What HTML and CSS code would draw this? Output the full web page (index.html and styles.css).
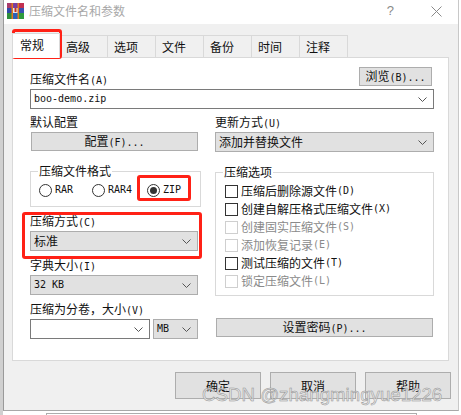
FILE: index.html
```html
<!DOCTYPE html>
<html lang="zh-CN">
<head>
    <meta charset="UTF-8">
    <title>压缩文件名和参数</title>
    <link rel="stylesheet" href="styles.css">
</head>
<body>
    <div class="window">
        <div class="titlebar">
            <svg class="app-icon" width="17" height="16" viewBox="0 0 17 16">
                <rect x="0" y="0" width="5" height="5" fill="#a83a6a"/>
                <rect x="0" y="5" width="5" height="5" fill="#2f4aa8"/>
                <rect x="0" y="10" width="5" height="6" fill="#2f8f3a"/>
                <rect x="6" y="0" width="5" height="5" fill="#7a3fa0"/>
                <rect x="6" y="5" width="5" height="5" fill="#e8e8e8"/>
                <rect x="6" y="10" width="5" height="6" fill="#2a62b8"/>
                <rect x="11" y="0" width="6" height="5" fill="#c23050"/>
                <rect x="11" y="5" width="6" height="5" fill="#3a50b0"/>
                <rect x="11" y="10" width="6" height="6" fill="#2f9a3e"/>
                <rect x="4.5" y="0" width="1.5" height="16" fill="#e07a20"/>
                <rect x="10.5" y="0" width="1.5" height="16" fill="#e07a20"/>
                <rect x="7.5" y="5" width="2" height="4" fill="#c03020"/>
            </svg>
            <span class="title">压缩文件名和参数</span>
            <span class="help-btn">?</span>
            <svg class="close-btn" width="11" height="11" viewBox="0 0 11 11">
                <path d="M0.5 0.5L10.5 10.5M10.5 0.5L0.5 10.5" stroke="#8a8a8a" fill="none"/>
            </svg>
        </div>

        <div class="content">
            <div class="tabs">
                <div class="tab active">常规</div>
                <div class="tab">高级</div>
                <div class="tab">选项</div>
                <div class="tab">文件</div>
                <div class="tab">备份</div>
                <div class="tab">时间</div>
                <div class="tab">注释</div>
            </div>

            <div class="panel">
                <div class="name-row">
                    <label class="lbl">压缩文件名<span class="en">(A)</span></label>
                    <button class="btn browse">浏览<span class="en">(B)...</span></button>
                </div>
                <div class="select white name-input">
                    <span class="en">boo-demo.zip</span>
                    <svg class="chev" width="9" height="5" viewBox="0 0 9 5"><path d="M0.5 0.5L4.5 4.5L8.5 0.5" stroke="#555" fill="none"/></svg>
                </div>

                <div class="columns">
                    <div class="col">
                        <label class="lbl">默认配置</label>
                        <button class="btn config">配置<span class="en">(F)...</span></button>

                        <fieldset class="group format">
                            <legend>压缩文件格式</legend>
                            <div class="radios">
                                <span class="radio"><i class="dot"></i><span class="en">RAR</span></span>
                                <span class="radio"><i class="dot"></i><span class="en">RAR4</span></span>
                                <span class="radio"><i class="dot on"></i><span class="en">ZIP</span></span>
                            </div>
                        </fieldset>

                        <label class="lbl method">压缩方式<span class="en">(C)</span></label>
                        <div class="select">
                            <span>标准</span>
                            <svg class="chev" width="9" height="5" viewBox="0 0 9 5"><path d="M0.5 0.5L4.5 4.5L8.5 0.5" stroke="#555" fill="none"/></svg>
                        </div>

                        <label class="lbl dict">字典大小<span class="en">(I)</span></label>
                        <div class="select">
                            <span class="en">32 KB</span>
                            <svg class="chev" width="9" height="5" viewBox="0 0 9 5"><path d="M0.5 0.5L4.5 4.5L8.5 0.5" stroke="#555" fill="none"/></svg>
                        </div>

                        <label class="lbl split">压缩为分卷，大小<span class="en">(V)</span></label>
                        <div class="split-row">
                            <div class="select white grow">
                                <span></span>
                                <svg class="chev" width="9" height="5" viewBox="0 0 9 5"><path d="M0.5 0.5L4.5 4.5L8.5 0.5" stroke="#555" fill="none"/></svg>
                            </div>
                            <div class="select unit">
                                <span class="en">MB</span>
                                <svg class="chev" width="9" height="5" viewBox="0 0 9 5"><path d="M0.5 0.5L4.5 4.5L8.5 0.5" stroke="#555" fill="none"/></svg>
                            </div>
                        </div>
                    </div>

                    <div class="col">
                        <label class="lbl">更新方式<span class="en">(U)</span></label>
                        <div class="select update">
                            <span>添加并替换文件</span>
                            <svg class="chev" width="9" height="5" viewBox="0 0 9 5"><path d="M0.5 0.5L4.5 4.5L8.5 0.5" stroke="#555" fill="none"/></svg>
                        </div>

                        <fieldset class="group options">
                            <legend>压缩选项</legend>
                            <div class="check"><i class="box"></i>压缩后删除源文件<span class="en">(D)</span></div>
                            <div class="check"><i class="box"></i>创建自解压格式压缩文件<span class="en">(X)</span></div>
                            <div class="check off"><i class="box"></i>创建固实压缩文件<span class="en">(S)</span></div>
                            <div class="check off"><i class="box"></i>添加恢复记录<span class="en">(E)</span></div>
                            <div class="check"><i class="box"></i>测试压缩的文件<span class="en">(T)</span></div>
                            <div class="check off"><i class="box"></i>锁定压缩文件<span class="en">(L)</span></div>
                        </fieldset>

                        <button class="btn password">设置密码<span class="en">(P)...</span></button>
                    </div>
                </div>
            </div>

            <div class="actions">
                <button class="btn action">确定</button>
                <button class="btn action">取消</button>
                <button class="btn action">帮助</button>
            </div>
        </div>
    </div>
    <div class="behind"></div>

    <!-- red marks drawn over the screenshot -->
    <div class="mark mark-tab"></div>
    <div class="mark mark-zip"></div>
    <div class="mark mark-method"></div>
    <div class="watermark">CSDN @zhangmingyue1226</div>
</body>
</html>
```

FILE: styles.css
```css
html, body {
    margin: 0;
    height: 415px;
    overflow: hidden;
    background: #fff;
}
body {
    font-family: "Noto Sans CJK SC", "Liberation Sans", sans-serif;
    font-size: 12px;
    line-height: 16px;
    color: #111;
    position: relative;
    border-left: 3px solid #d0d0d0;
    box-sizing: border-box;
}
.window {
    width: 456px;
    height: 411px;
    box-sizing: border-box;
    border-left: 1px solid #9a9a9a;
    border-right: 1px solid #c8c8c8;
    border-bottom: 1px solid #a8a8a8;
    background: #f0f0f0;
}
.titlebar {
    height: 24px;
    box-sizing: border-box;
    background: #fff;
    display: flex;
    align-items: center;
    padding: 0 16px 2px 3px;
}
.app-icon {
    margin-right: 5px;
}
.title {
    flex: 1;
    color: #a8a8a8;
}
.help-btn {
    font-family: "Liberation Sans", sans-serif;
    font-size: 13px;
    color: #8a8a8a;
    margin-right: 37px;
}
.content {
    padding: 11px 8px 0 8px;
}
.tabs {
    display: flex;
    height: 22px;
}
.tab {
    width: 48px;
    height: 22px;
    box-sizing: border-box;
    border: 1px solid #d9d9d9;
    border-bottom: none;
    border-left: none;
    padding-left: 6px;
    line-height: 22px;
}
.tab.active {
    background: #fff;
    border-left: 1px solid #d9d9d9;
    position: relative;
    z-index: 1;
    padding-left: 7px;
    margin-top: -2px;
    height: 25px;
}
.panel {
    width: 437px;
    height: 304px;
    box-sizing: border-box;
    background: #fff;
    border: 1px solid #d9d9d9;
    padding: 8px 16px 0 17px;
}
.lbl {
    display: block;
    height: 16px;
    line-height: 14px;
}
.name-row {
    display: flex;
    justify-content: space-between;
    align-items: flex-end;
    height: 22px;
    margin-bottom: 1px;
}
.en {
    font-family: "DejaVu Sans Mono", "Liberation Mono", monospace;
    font-size: 10px;
}
.btn {
    font: inherit;
    color: #111;
    background: #e1e1e1;
    border: 1px solid #adadad;
    padding: 0;
    box-sizing: border-box;
    display: block;
}
.browse {
    width: 73px;
    height: 19px;
    line-height: 16px;
    margin-top: 1px;
    align-self: flex-start;
}
.select {
    display: flex;
    justify-content: space-between;
    align-items: center;
    height: 20px;
    box-sizing: border-box;
    padding: 0 6px 0 3px;
    background: #e1e1e1;
    border: 1px solid #adadad;
}
.select.white {
    background: #fff;
    border-color: #7a7a7a;
}
.name-input {
    width: 404px;
    margin-bottom: 6px;
}
.columns {
    display: grid;
    grid-template-columns: 168px 219px;
    column-gap: 17px;
}
.col .lbl:first-child {
    margin-bottom: 1px;
}
.config {
    width: 167px;
    margin-left: 1px;
    height: 19px;
}
.group {
    margin: 0;
    padding: 0;
    border: 1px solid #d9d9d9;
    box-sizing: border-box;
}
.group legend {
    margin-left: 7px;
    padding: 0 1px;
    line-height: 16px;
    height: 16px;
}
.format {
    height: 44px;
    margin-top: 12px;
}
.radios {
    display: flex;
    padding: 3px 0 0 8px;
}
.radio {
    display: flex;
    align-items: center;
    width: 53px;
    gap: 3px;
}
.radio:nth-child(2) {
    width: 55px;
}
.dot {
    width: 13px;
    height: 13px;
    box-sizing: border-box;
    border: 1px solid #333;
    border-radius: 50%;
    flex: none;
    position: relative;
}
.dot.on::after {
    content: "";
    position: absolute;
    inset: 2px;
    border-radius: 50%;
    background: #333;
}
.method {
    margin-top: 7px;
    margin-bottom: 1px;
}
.dict {
    margin-top: 7px;
    margin-bottom: 1px;
}
.split {
    margin-top: 7px;
    margin-bottom: 1px;
}
.split-row {
    display: flex;
    gap: 3px;
}
.grow {
    flex: 1;
}
.unit {
    width: 45px;
}
.options {
    height: 132px;
    margin-top: 12px;
}
.check {
    display: flex;
    align-items: center;
    height: 18px;
    padding-left: 9px;
    white-space: nowrap;
}
.options .check:first-of-type {
    margin-top: 2px;
}
.box {
    width: 13px;
    height: 13px;
    box-sizing: border-box;
    border: 1px solid #333;
    margin-right: 3px;
    background: #fff;
    flex: none;
}
.check.off {
    color: #8a8a8a;
}
.check.off .box {
    border-color: #cfcfcf;
}
.password {
    width: 217px;
    height: 19px;
    margin: 22px 0 0 1px;
}
.actions {
    display: flex;
    justify-content: flex-end;
    gap: 9px;
    margin-top: 11px;
    width: 439px;
}
.action {
    width: 86px;
    height: 27px;
}
.behind {
    position: absolute;
    left: 43px;
    top: 413px;
    width: 369px;
    height: 6px;
    border: 1px solid #adadad;
}
.mark {
    position: absolute;
    border: 3px solid #ff2116;
    border-radius: 3px;
    box-sizing: border-box;
    pointer-events: none;
}
.mark-tab {
    left: 9px;
    top: 29px;
    width: 50px;
    height: 30px;
}
.mark-zip {
    left: 134px;
    top: 175px;
    width: 54px;
    height: 26px;
}
.mark-method {
    left: 19px;
    top: 212px;
    width: 180px;
    height: 47px;
}
.watermark {
    position: absolute;
    left: 199px;
    top: 385px;
    font-family: "Liberation Sans", sans-serif;
    font-size: 18.7px;
    line-height: 20px;
    color: #e8e8e8;
    -webkit-text-stroke: 0.5px #8a8a8a;
    opacity: 0.9;
    white-space: nowrap;
}
```
